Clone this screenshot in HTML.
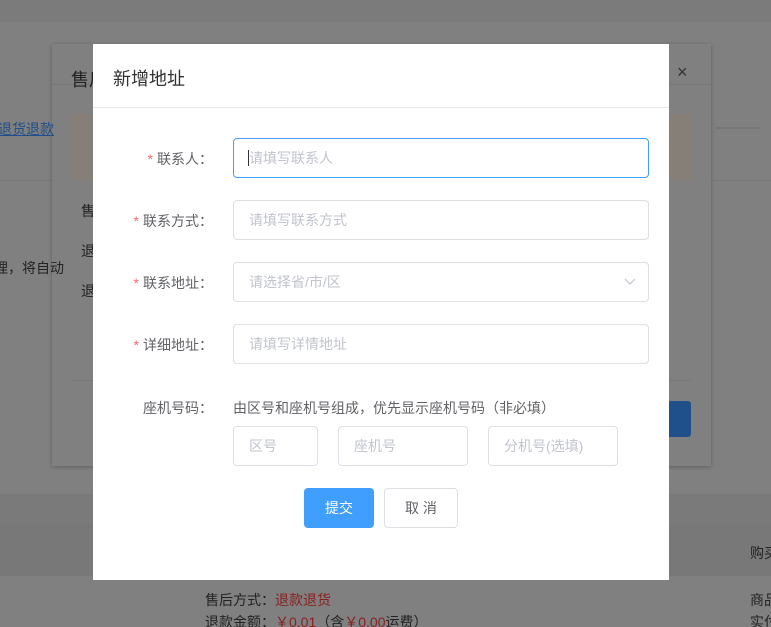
<!DOCTYPE html>
<html style="width:771px;height:627px;overflow:hidden;background:#808080"><head><meta charset="utf-8"><style>
*{box-sizing:border-box;margin:0;padding:0}
body{width:771px;height:627px;overflow:hidden;background:#808080;font-family:"Liberation Sans","Noto Sans CJK SC",sans-serif;position:relative;font-size:14px}
.a{position:absolute;white-space:nowrap}
.inp{position:absolute;border:1px solid #dcdfe6;border-radius:4px;height:40px;background:#fff;color:#c0c4cc;font-size:14px;line-height:38px;padding-left:15px;white-space:nowrap}
.lab{position:absolute;width:120px;text-align:right;color:#606266;font-size:14px;left:93px;white-space:nowrap}
.lab b{color:#f56c6c;font-weight:normal;margin-right:4px}
</style></head><body>
<div class="a" style="left:0;top:0;width:771px;height:627px;background:#808080"></div>
<div class="a" style="left:0;top:0;width:771px;height:22px;background:#7b7b7b"></div>
<div class="a" style="left:0;top:180px;width:771px;height:1px;background:#777"></div>
<div class="a" style="left:0;top:494px;width:771px;height:30px;background:#7a7a7a"></div>
<div class="a" style="left:0;top:524px;width:771px;height:52px;background:#787878"></div>
<div class="a" style="left:52px;top:44px;width:659px;height:422px;background:#808080;box-shadow:0 1px 4px rgba(0,0,0,.25)"></div>
<div class="a" style="left:52px;top:84px;width:659px;height:1px;background:#777"></div>
<div class="a" style="left:72px;top:114px;width:619px;height:66px;background:#857f78"></div>
<div class="a" style="left:72px;top:380px;width:619px;height:1px;background:#777"></div>
<div class="a" style="left:640px;top:401px;width:51px;height:36px;background:#20508a;border-radius:3px"></div>
<div class="a" style="left:715px;top:127px;width:45px;height:2px;background:#777"></div>
<div class="a" style="left:71px;top:66px;font-size:18px;color:#222">售后</div>
<div class="a" style="left:677px;top:62px;font-size:18px;color:#333">×</div>
<div class="a" style="left:-16px;top:119px;color:#1f4f8a;text-decoration:underline">如退货退款</div>
<div class="a" style="left:-6px;top:258px;color:#222">理，将自动</div>
<div class="a" style="left:81px;top:201px;color:#222">售</div>
<div class="a" style="left:81px;top:241px;color:#222">退</div>
<div class="a" style="left:81px;top:281px;color:#222">退</div>
<div class="a" style="left:750px;top:543px;color:#222">购买</div>
<div class="a" style="left:205px;top:590px;color:#222">售后方式：<span style="color:#8a1f1f">退款退货</span></div>
<div class="a" style="left:205px;top:612px;color:#222">退款金额：<span style="color:#8a1f1f">￥0.01</span>（含<span style="color:#8a1f1f">￥0.00</span>运费）</div>
<div class="a" style="left:750px;top:590px;color:#222">商品</div>
<div class="a" style="left:750px;top:612px;color:#222">实付</div>

<div class="a" style="left:93px;top:44px;width:576px;height:536px;background:#fff">
<div class="a" style="left:20px;top:21px;font-size:18px;color:#303133">新增地址</div>
<div class="a" style="left:0;top:63px;width:576px;height:1px;background:#e8e8e8"></div>
</div>
<div class="lab" style="top:149px"><b>*</b>联系人：</div>
<div class="lab" style="top:211px"><b>*</b>联系方式：</div>
<div class="lab" style="top:273px"><b>*</b>联系地址：</div>
<div class="lab" style="top:335px"><b>*</b>详细地址：</div>
<div class="lab" style="top:398px">座机号码：</div>
<div class="inp" style="left:233px;top:138px;width:416px;border-color:#409eff"><span style="border-left:1px solid #333;margin-left:-1px"></span>请填写联系人</div>
<div class="inp" style="left:233px;top:200px;width:416px">请填写联系方式</div>
<div class="inp" style="left:233px;top:262px;width:416px">请选择省/市/区<svg style="position:absolute;right:12px;top:15px" width="12" height="8" viewBox="0 0 12 8"><path d="M1 1l5 5 5-5" fill="none" stroke="#c0c4cc" stroke-width="1.2"/></svg></div>
<div class="inp" style="left:233px;top:324px;width:416px">请填写详情地址</div>
<div class="a" style="left:233px;top:398px;color:#606266">由区号和座机号组成，优先显示座机号码（非必填）</div>
<div class="inp" style="left:233px;top:426px;width:85px">区号</div>
<div class="inp" style="left:338px;top:426px;width:130px">座机号</div>
<div class="inp" style="left:488px;top:426px;width:130px">分机号(选填)</div>
<div class="a" style="left:304px;top:488px;width:70px;height:40px;background:#409eff;border-radius:4px;color:#fff;text-align:center;line-height:40px">提交</div>
<div class="a" style="left:384px;top:488px;width:74px;height:40px;border:1px solid #dcdfe6;border-radius:4px;background:#fff;color:#606266;text-align:center;line-height:38px">取 消</div>
</body></html>
